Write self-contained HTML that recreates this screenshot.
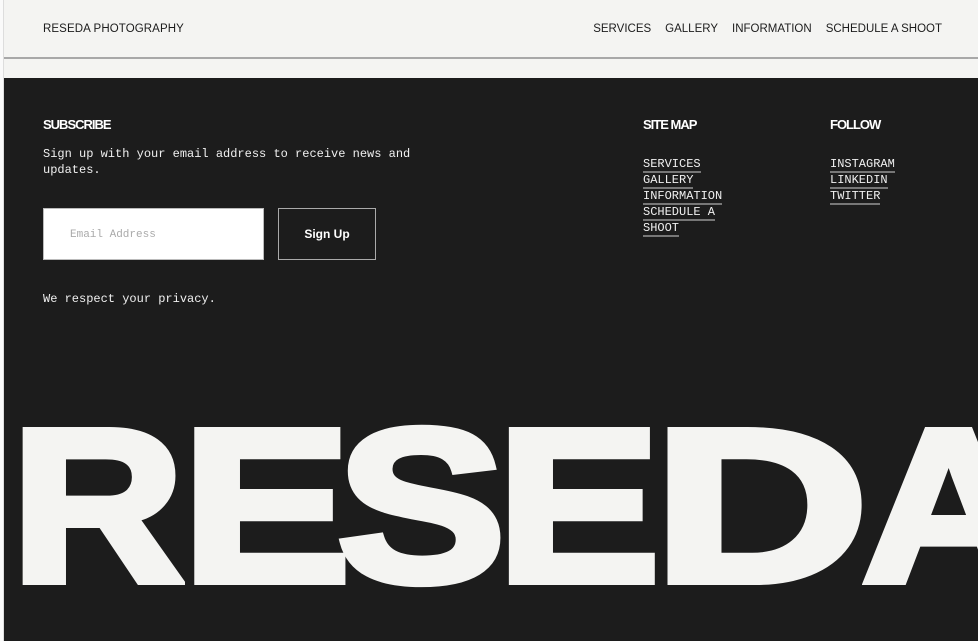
<!DOCTYPE html>
<html><head><meta charset="utf-8"><style>
*{margin:0;padding:0;box-sizing:border-box}
html,body{width:978px;height:641px;overflow:hidden;background:#f4f4f2;font-family:"Liberation Sans",sans-serif}
.edge{position:absolute;left:0;top:0;width:4px;height:641px;background:#fafafa;border-right:1px solid #ddd}
.hdr{position:absolute;left:43px;top:23px;font-size:11.5px;color:#1c1c1c;letter-spacing:.1px}
.nav{position:absolute;right:36px;top:23px;font-size:11.5px;color:#1c1c1c;letter-spacing:0}
.nav span{margin-left:14px}
.line{position:absolute;left:4px;right:0;top:57px;height:2px;background:#a8a8a8}
.dark{position:absolute;left:4px;right:0;top:78px;bottom:0;background:#1c1c1c;color:#f4f4f2;overflow:hidden}
.h{position:absolute;font-weight:bold;font-size:13px;letter-spacing:-1px;color:#fff}
.m{position:absolute;font-family:"Liberation Mono",monospace;font-size:12px;line-height:16px;color:#f0f0f0}
.m a{color:#f0f0f0;text-decoration:none;border-bottom:2px solid #777;padding-bottom:0}
.inp{position:absolute;left:39px;top:130px;width:221px;height:52px;background:#fff;border:1px solid #bbb;font-family:"Liberation Mono",monospace;font-size:11px;color:#aaa;padding:20px 0 0 26px}
.btn{position:absolute;left:274px;top:130px;width:98px;height:52px;border:1px solid #aaa;font-weight:bold;font-size:12px;color:#fff;text-align:center;line-height:50px}
.big{position:absolute;top:0;font-weight:bold;font-size:218px;line-height:1;color:#f4f4f2;transform-origin:0 0;-webkit-text-stroke:8px #f4f4f2}
</style></head><body>
<div class="edge"></div>
<div class="hdr">RESEDA PHOTOGRAPHY</div>
<div class="nav"><span>SERVICES</span><span>GALLERY</span><span>INFORMATION</span><span>SCHEDULE A SHOOT</span></div>
<div class="line"></div>
<div class="dark">
<div class="h" style="left:39px;top:39px">SUBSCRIBE</div>
<div class="m" style="left:39px;top:68px">Sign up with your email address to receive news and<br>updates.</div>
<div class="inp">Email Address</div>
<div class="btn">Sign Up</div>
<div class="m" style="left:39px;top:213px">We respect your privacy.</div>
<div class="h" style="left:639px;top:39px">SITE MAP</div>
<div class="m" style="left:639px;top:78px"><a>SERVICES</a><br><a>GALLERY</a><br><a>INFORMATION</a><br><a>SCHEDULE A</a><br><a>SHOOT</a></div>
<div class="h" style="left:826px;top:39px">FOLLOW</div>
<div class="m" style="left:826px;top:78px"><a>INSTAGRAM</a><br><a>LINKEDIN</a><br><a>TWITTER</a></div>
<div style="position:absolute;left:0;top:320px;width:980px;height:200px">
<span class="big" style="left:7px;transform:scaleX(1.1)">R</span>
<span class="big" style="left:178px;transform:scaleX(1.16)">E</span>
<span class="big" style="left:333px;transform:scaleX(1.16)">S</span>
<span class="big" style="left:493px;transform:scaleX(1.12)">E</span>
<span class="big" style="left:649px;transform:scaleX(1.37)">D</span>
<span class="big" style="left:858px;transform:scaleX(1.1)">A</span>
</div>
</div>
</body></html>
